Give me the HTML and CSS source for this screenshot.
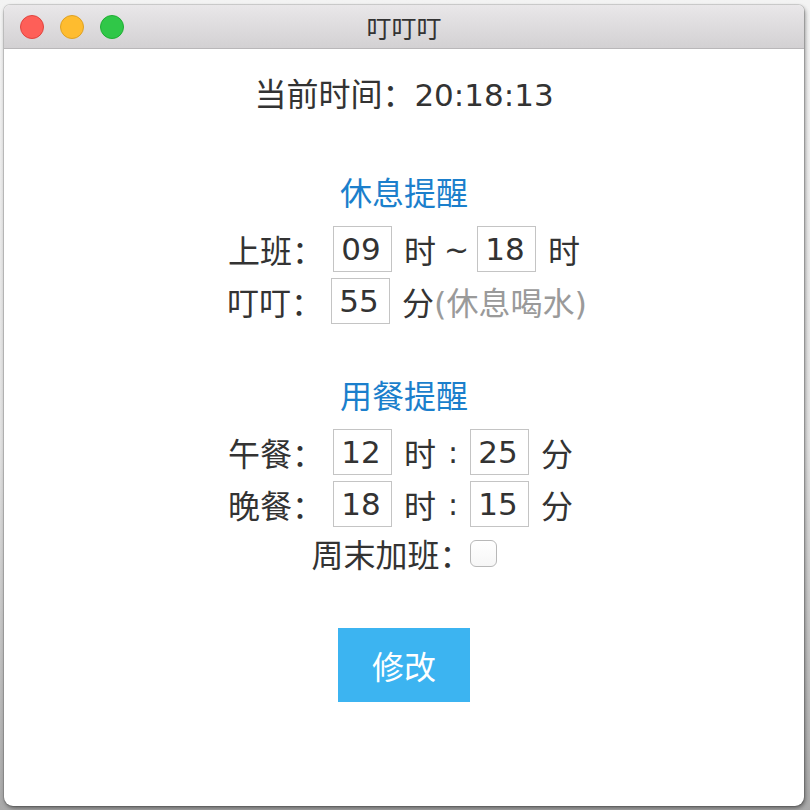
FILE: index.html
```html
<!DOCTYPE html>
<html lang="zh-CN">
<head>
<meta charset="utf-8">
<title>叮叮叮</title>
<link rel="stylesheet" href="styles.css">
</head>
<body>
<div class="window">
  <div class="titlebar">
    <div class="lights">
      <span class="light red"></span>
      <span class="light yellow"></span>
      <span class="light green"></span>
    </div>
    <div class="title">叮叮叮</div>
    <div></div>
  </div>
  <div class="content">
    <div class="clock">当前时间：<span class="digits">20:18:13</span></div>

    <div class="section-title first">休息提醒</div>
    <div class="fields">
      <div class="row">
        <span class="label">上班：</span>
        <input class="num" type="text" value="09">
        <span class="unit">时</span>
        <span class="sep wide">~</span>
        <input class="num" type="text" value="18">
        <span class="unit">时</span>
      </div>
      <div class="row shifted">
        <span class="label">叮叮：</span>
        <input class="num" type="text" value="55">
        <span class="unit">分</span><span class="hint">(休息喝水)</span>
      </div>
    </div>

    <div class="section-title">用餐提醒</div>
    <div class="fields">
      <div class="row">
        <span class="label">午餐：</span>
        <input class="num" type="text" value="12">
        <span class="unit">时</span>
        <span class="sep">:</span>
        <input class="num" type="text" value="25">
        <span class="unit">分</span>
      </div>
      <div class="row">
        <span class="label">晚餐：</span>
        <input class="num" type="text" value="18">
        <span class="unit">时</span>
        <span class="sep">:</span>
        <input class="num" type="text" value="15">
        <span class="unit">分</span>
      </div>
    </div>
    <label class="weekend">周末加班：<input class="check" type="checkbox"></label>

    <button class="submit" type="button">修改</button>
  </div>
</div>
</body>
</html>
```

FILE: styles.css
```css
html, body {
  margin: 0;
  padding: 0;
}

body {
  width: 810px;
  height: 810px;
  overflow: hidden;
  background: linear-gradient(to bottom, #f3f3f3 0%, #e2e2e2 55%, #a9a9a9 100%);
  font-family: "DejaVu Sans", "Noto Sans CJK SC", sans-serif;
}

.window {
  box-sizing: border-box;
  width: 800px;
  height: 801px;
  margin: 5px 0 0 4px;
  background: #ffffff;
  border-radius: 6px 6px 9px 9px;
  overflow: hidden;
  box-shadow: 0 0 0 1px rgba(0, 0, 0, 0.12), 1px 2px 4px rgba(0, 0, 0, 0.45);
}

.titlebar {
  box-sizing: border-box;
  height: 44px;
  display: grid;
  grid-template-columns: 1fr auto 1fr;
  align-items: center;
  background: linear-gradient(to bottom, #e9e7e9, #d3d1d3);
  border-bottom: 1px solid #b9b7b9;
}

.lights {
  display: flex;
  gap: 16px;
  padding-left: 16px;
}

.light {
  box-sizing: border-box;
  width: 24px;
  height: 24px;
  border-radius: 50%;
}

.red {
  background: #fe5f58;
  border: 1px solid #e0443e;
}

.yellow {
  background: #febc2f;
  border: 1px solid #dea123;
}

.green {
  background: #30c748;
  border: 1px solid #1fae33;
}

.title {
  font-family: "Noto Sans CJK SC", sans-serif;
  font-size: 25px;
  color: #333333;
  line-height: 30px;
}

.content {
  display: flex;
  flex-direction: column;
  align-items: center;
  padding-top: 26px;
  color: #333333;
  font-size: 32px;
}

.clock {
  line-height: 40px;
  white-space: nowrap;
}

.digits {
  font-size: 31px;
}

.section-title {
  margin-top: 53px;
  line-height: 40px;
  color: #1b7fcc;
}

.section-title.first {
  margin-top: 59px;
}

.fields {
  width: 352px;
  margin-top: 12px;
  display: flex;
  flex-direction: column;
  gap: 6px;
}

.row {
  display: flex;
  align-items: center;
  height: 46px;
  white-space: nowrap;
}

.row.shifted {
  margin-left: -1px;
}

.label {
  width: 105px;
  flex: none;
}

.row.shifted .label {
  width: 104px;
}

.num {
  box-sizing: border-box;
  width: 59px;
  height: 46px;
  margin: 0;
  padding: 0 3px 0 0;
  border: 1px solid #c4c4c4;
  border-radius: 0;
  background: #ffffff;
  color: #333333;
  font-family: "DejaVu Sans", sans-serif;
  font-size: 31px;
  text-align: center;
  flex: none;
}

.unit {
  margin-left: 12px;
}

.sep {
  width: 34px;
  text-align: center;
  font-size: 30px;
}

.sep.wide {
  width: 48px;
}

.hint {
  color: #9a9a9a;
}

.weekend {
  display: flex;
  align-items: center;
  margin-top: 6px;
  height: 40px;
  white-space: nowrap;
}

.check {
  appearance: none;
  -webkit-appearance: none;
  box-sizing: border-box;
  width: 27px;
  height: 27px;
  margin: 0 0 0 -2px;
  border: 1px solid #b8b8b8;
  border-radius: 6px;
  background: linear-gradient(to bottom, #ffffff, #f6f6f6);
}

.submit {
  margin-top: 55px;
  width: 132px;
  height: 74px;
  border: none;
  border-radius: 0;
  background: #3cb4f1;
  color: #ffffff;
  font-family: "Noto Sans CJK SC", sans-serif;
  font-size: 32px;
  padding: 0;
}
```
